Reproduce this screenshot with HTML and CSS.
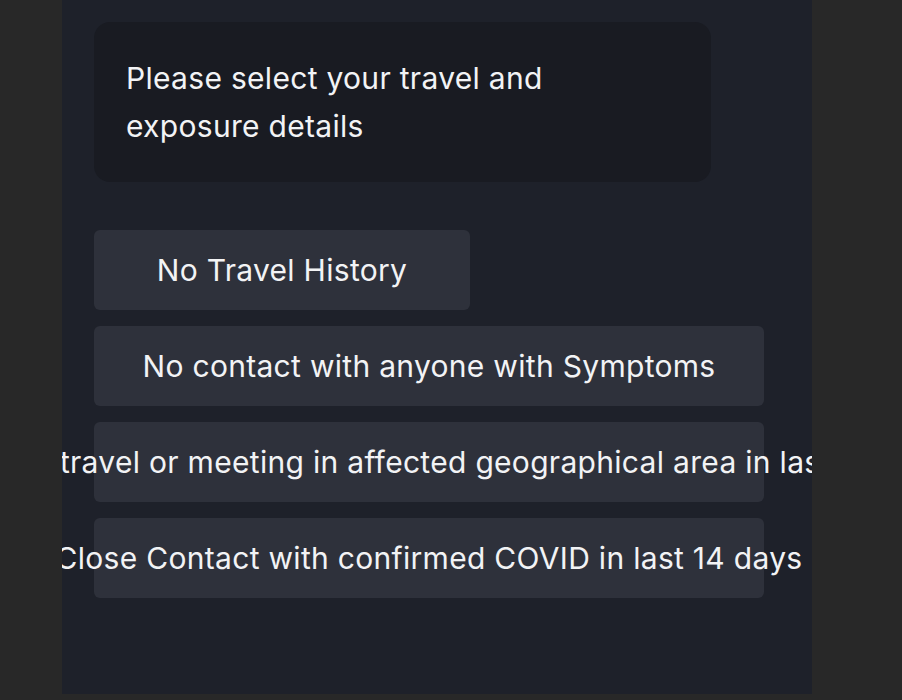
FILE: index.html
```html
<!DOCTYPE html>
<html>
<head>
<meta charset="utf-8">
<link rel="stylesheet" href="styles.css">
</head>
<body>
<div class="panel">
  <div class="bubble">Please select your travel and exposure details</div>
  <div class="options">
    <button class="opt opt-short">No Travel History</button>
    <button class="opt">No contact with anyone with Symptoms</button>
    <button class="opt">History of travel or meeting in affected geographical area in last 14 days</button>
    <button class="opt">Close Contact with confirmed COVID in last 14 days</button>
  </div>
</div>
</body>
</html>
```
FILE: styles.css
```css
html, body {
  margin: 0;
  padding: 0;
  background: #282828;
  height: 100%;
}
body {
  font-family: Inter, "Noto Sans", sans-serif;
  color: #f2f3f5;
}
.panel {
  margin-left: 62px;
  width: 750px;
  height: 694px;
  box-sizing: border-box;
  padding: 22px 32px;
  background: #1e212a;
  overflow: hidden;
  display: flex;
  flex-direction: column;
}
.bubble {
  width: 617px;
  box-sizing: border-box;
  padding: 32px 140px 32px 32px;
  background: #191b22;
  border-radius: 16px;
  font-size: 30px;
  letter-spacing: 0.3px;
  line-height: 48px;
}
.options {
  margin-top: 48px;
  display: flex;
  flex-direction: column;
  gap: 16px;
  align-items: flex-start;
}
.opt {
  font-family: inherit;
  font-size: 30px;
  letter-spacing: 0.3px;
  color: #f2f3f5;
  background: #2e313b;
  border: none;
  border-radius: 6px;
  height: 80px;
  width: 670px;
  padding: 0;
  display: flex;
  align-items: center;
  justify-content: center;
  white-space: nowrap;
}
.opt-short {
  width: 376px;
}
```
